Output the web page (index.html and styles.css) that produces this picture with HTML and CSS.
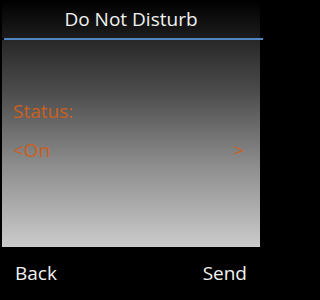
FILE: index.html
```html
<!DOCTYPE html>
<html>
<head>
<meta charset="utf-8">
<link rel="stylesheet" href="styles.css">
</head>
<body>
<div class="phone">
  <header class="titlebar">
    <h1 class="title">Do Not Disturb</h1>
  </header>
  <div class="divider"></div>
  <main class="content">
    <div class="label">Status:</div>
    <div class="option">
      <span class="opt-left">&lt;On</span>
      <span class="opt-right">&gt;</span>
    </div>
  </main>
  <footer class="softkeys">
    <span class="softkey">Back</span>
    <span class="softkey">Send</span>
  </footer>
</div>
</body>
</html>
```
FILE: styles.css
```css
html, body {
  margin: 0;
  padding: 0;
  background: #000;
}
body {
  width: 263px;
  height: 300px;
  overflow: hidden;
  font-family: "Open Sans", "DejaVu Sans", sans-serif;
}
.phone {
  width: 263px;
  height: 300px;
  display: flex;
  flex-direction: column;
  background: #000;
}
.titlebar {
  height: 38px;
  margin: 0 3px 0 2px;
  background: linear-gradient(#000 0%, #1c1c1c 100%);
  display: flex;
  align-items: center;
  justify-content: center;
}
.title {
  margin: 0;
  font-weight: 500;
  font-size: 19px;
  color: #f2f2f2;
  line-height: 1;
  padding-top: 1px;
}
.divider {
  height: 2px;
  margin-left: 4px;
  background: #4f87c4;
}
.content {
  height: 207px;
  margin: 0 3px 0 2px;
  background: linear-gradient(#282828 0%, #4c4c4c 25%, #8c8c8c 60%, #cbcbcb 100%);
  padding: 62px 16px 0 11px;
  box-sizing: border-box;
  color: #cc601c;
  font-size: 19px;
  font-weight: 500;
  line-height: 1;
}
.label {
  height: 39px;
}
.option {
  display: flex;
  justify-content: space-between;
}
.softkeys {
  flex: 1;
  display: flex;
  justify-content: space-between;
  align-items: center;
  padding: 0 16px 1px 15px;
  color: #f2f2f2;
  font-size: 19px;
  font-weight: 500;
}
```
